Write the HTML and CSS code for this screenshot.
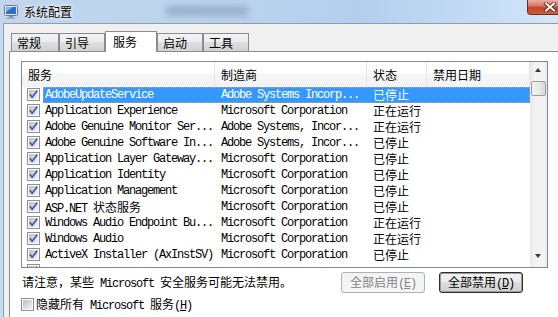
FILE: index.html
```html
<!DOCTYPE html>
<html>
<head>
<meta charset="utf-8">
<link rel="stylesheet" href="styles.css">
</head>
<body>
<svg class="defs" width="0" height="0">
  <defs>
    <linearGradient id="cbg" x1="0" y1="0" x2="1" y2="1">
      <stop offset="0" stop-color="#b9bec6"/>
      <stop offset="1" stop-color="#f4f4f5"/>
    </linearGradient>
    <symbol id="chk" viewBox="0 0 13 13">
      <rect x="0.5" y="0.5" width="12" height="12" fill="#fff" stroke="#8f8f8f"/>
      <rect x="2" y="2" width="9" height="9" fill="url(#cbg)"/>
      <path d="M2.8 6.4 L5.2 9.2 L10.2 2.8" fill="none" stroke="#40569a" stroke-width="1.7"/>
    </symbol>
    <symbol id="unchk" viewBox="0 0 13 13">
      <rect x="0.5" y="0.5" width="12" height="12" fill="#fff" stroke="#8f8f8f"/>
      <rect x="2" y="2" width="9" height="9" fill="url(#cbg)"/>
    </symbol>
  </defs>
</svg>
<div class="titlebar">
  <svg class="appicon" width="14" height="14" viewBox="0 0 14 14">
    <rect x="0.5" y="0.5" width="13" height="10" rx="1" fill="#dfe6ef" stroke="#6b7b91"/>
    <rect x="2" y="2" width="10" height="7" fill="#2f6fc4"/>
    <path d="M2 2 L9 2 L2 7 Z" fill="#7fb2ea"/>
    <rect x="5" y="11" width="4" height="1.5" fill="#7d8796"/>
    <rect x="3" y="12.5" width="8" height="1.5" fill="#9aa4b2"/>
  </svg>
  <span class="title">系统配置</span>
  <div class="blur"></div>
  <div class="close">
    <svg width="14" height="10" viewBox="0 0 14 10">
      <path d="M3 1.5 L11 8.5 M11 1.5 L3 8.5" stroke="#5a1d14" stroke-width="3.6" stroke-linecap="square"/>
      <path d="M3 1.5 L11 8.5 M11 1.5 L3 8.5" stroke="#fff" stroke-width="2" stroke-linecap="square"/>
    </svg>
  </div>
</div>
<div class="client">
  <div class="tabs">
    <div class="tab t1">常规</div>
    <div class="tab t2">引导</div>
    <div class="tab sel">服务</div>
    <div class="tab t4">启动</div>
    <div class="tab t5">工具</div>
  </div>
  <div class="panel">
    <div class="list">
      <div class="lv">
        <div class="hdr">
          <div class="hc">服务</div>
          <div class="hc">制造商</div>
          <div class="hc">状态</div>
          <div class="hc">禁用日期</div>
        </div>
        <div class="rows">
          <div class="row selrow"><div class="ck"><svg class="cb"><use href="#chk"/></svg></div><div class="cells"><div class="c1">AdobeUpdateService</div><div class="c2">Adobe Systems Incorp...</div><div class="c3">已停止</div><div class="c4"></div></div></div>
          <div class="row"><div class="ck"><svg class="cb"><use href="#chk"/></svg></div><div class="cells"><div class="c1">Application Experience</div><div class="c2">Microsoft Corporation</div><div class="c3">正在运行</div><div class="c4"></div></div></div>
          <div class="row"><div class="ck"><svg class="cb"><use href="#chk"/></svg></div><div class="cells"><div class="c1">Adobe Genuine Monitor Ser...</div><div class="c2">Adobe Systems, Incor...</div><div class="c3">正在运行</div><div class="c4"></div></div></div>
          <div class="row"><div class="ck"><svg class="cb"><use href="#chk"/></svg></div><div class="cells"><div class="c1">Adobe Genuine Software In...</div><div class="c2">Adobe Systems, Incor...</div><div class="c3">已停止</div><div class="c4"></div></div></div>
          <div class="row"><div class="ck"><svg class="cb"><use href="#chk"/></svg></div><div class="cells"><div class="c1">Application Layer Gateway...</div><div class="c2">Microsoft Corporation</div><div class="c3">已停止</div><div class="c4"></div></div></div>
          <div class="row"><div class="ck"><svg class="cb"><use href="#chk"/></svg></div><div class="cells"><div class="c1">Application Identity</div><div class="c2">Microsoft Corporation</div><div class="c3">已停止</div><div class="c4"></div></div></div>
          <div class="row"><div class="ck"><svg class="cb"><use href="#chk"/></svg></div><div class="cells"><div class="c1">Application Management</div><div class="c2">Microsoft Corporation</div><div class="c3">已停止</div><div class="c4"></div></div></div>
          <div class="row"><div class="ck"><svg class="cb"><use href="#chk"/></svg></div><div class="cells"><div class="c1">ASP.NET <span class="cj">状态服务</span></div><div class="c2">Microsoft Corporation</div><div class="c3">已停止</div><div class="c4"></div></div></div>
          <div class="row"><div class="ck"><svg class="cb"><use href="#chk"/></svg></div><div class="cells"><div class="c1">Windows Audio Endpoint Bu...</div><div class="c2">Microsoft Corporation</div><div class="c3">正在运行</div><div class="c4"></div></div></div>
          <div class="row"><div class="ck"><svg class="cb"><use href="#chk"/></svg></div><div class="cells"><div class="c1">Windows Audio</div><div class="c2">Microsoft Corporation</div><div class="c3">正在运行</div><div class="c4"></div></div></div>
          <div class="row"><div class="ck"><svg class="cb"><use href="#chk"/></svg></div><div class="cells"><div class="c1">ActiveX Installer (AxInstSV)</div><div class="c2">Microsoft Corporation</div><div class="c3">已停止</div><div class="c4"></div></div></div>
          <div class="row"><div class="ck"><svg class="cb"><use href="#chk"/></svg></div><div class="cells"><div class="c1"></div><div class="c2"></div><div class="c3"></div><div class="c4"></div></div></div>
        </div>
      </div>
      <div class="sb">
        <div class="arrow up"></div>
        <div class="thumb"></div>
        <div class="track"></div>
        <div class="arrow down"></div>
      </div>
    </div>
    <div class="note-row">
      <div class="note">请注意，某些<span class="m"> Microsoft </span>安全服务可能无法禁用。</div>
      <div class="btn dis">全部启用<span class="m">(<u>E</u>)</span></div>
      <div class="btn def">全部禁用<span class="m">(<u>D</u>)</span></div>
    </div>
    <div class="hide-row">
      <svg class="cb"><use href="#unchk"/></svg>
      <span class="lbl">隐藏所有<span class="m"> Microsoft </span>服务<span class="m">(<u>H</u>)</span></span>
    </div>
  </div>
</div>
</body>
</html>
```
FILE: styles.css
```css
* { box-sizing: border-box; margin: 0; padding: 0; }
html, body { width: 558px; height: 317px; overflow: hidden; }
body {
  background: #c8dbef;
  font-family: "Noto Sans CJK SC", sans-serif;
  font-size: 12px;
  color: #000;
}
.defs { position: absolute; width: 0; height: 0; }

.titlebar {
  position: relative;
  height: 23px;
  display: flex;
  align-items: center;
  padding-left: 4px;
  background: linear-gradient(90deg, #c1d6ed 0%, #bcd3ed 35%, #b4cfee 65%, #c3dbf4 85%, #d4e7f8 100%);
}
.appicon { width: 14px; height: 14px; flex: none; margin-top: 1px; }
.title {
  margin-left: 6px;
  font-size: 12px;
  line-height: 14px;
  text-shadow: 0 0 5px #fff, 0 0 3px #fff;
}
.blur {
  position: absolute;
  left: 166px;
  top: 6px;
  width: 82px;
  height: 10px;
  background: #7c8ea9;
  filter: blur(3px);
  opacity: .5;
}
.close {
  position: absolute;
  left: 527px;
  top: 0;
  width: 44px;
  height: 15px;
  border: 1px solid #6e2a20;
  border-top: none;
  border-radius: 0 0 0 4px;
  background: linear-gradient(#eab1a4, #d67a66 40%, #c3432c 55%, #cf5c41);
}
.close svg { position: absolute; left: 15px; top: 2px; }

.client {
  height: 294px;
  margin-left: 3px;
  border-top: 1px solid #8d9db2;
  border-left: 1px solid #8d9db2;
  background: #f0f0f0;
  padding-left: 5px;
}
.tabs {
  display: flex;
  align-items: flex-end;
  height: 27px;
  padding-top: 7px;
  padding-left: 2px;
}
.tab {
  height: 18px;
  border: 1px solid #898c95;
  border-bottom: none;
  background: linear-gradient(#f3f3f3, #ececec 50%, #dedede 50%, #d2d2d2);
  padding-left: 5px;
  line-height: 17px;
  font-size: 12px;
}
.t1 { width: 48px; }
.t2 { width: 46px; }
.t4 { width: 46px; }
.t5 { width: 46px; }
.tab.sel {
  width: 52px;
  height: 21px;
  margin-bottom: -1px;
  background: #fff;
  position: relative;
  z-index: 1;
  padding-left: 7px;
  line-height: 19px;
}

.panel {
  height: 267px;
  border-top: 1px solid #898c95;
  border-left: 1px solid #898c95;
  background: #fff;
  padding-left: 11px;
  padding-top: 9px;
}
.list {
  width: 527px;
  height: 207px;
  border: 1px solid #828790;
  display: flex;
  background: #fff;
}
.lv { width: 508px; overflow: hidden; }
.hdr {
  display: grid;
  grid-template-columns: 193px 152px 60px 103px;
  height: 25px;
  background: linear-gradient(#ffffff, #ffffff 45%, #f6f7f8 45%, #f1f2f4);
}
.hc {
  padding-left: 6px;
  padding-top: 4px;
  line-height: 18px;
  border-right: 1px solid #e3e5e8;
  font-size: 12px;
}
.rows { height: 180px; overflow: hidden; }
.row { display: flex; height: 16px; }
.ck { width: 21px; flex: none; padding-left: 5px; padding-top: 1px; }
.cb { width: 13px; height: 13px; display: block; }
.cells {
  display: grid;
  grid-template-columns: 172px 152px 60px 103px;
  height: 16px;
  line-height: 16px;
  font-family: "Liberation Mono", monospace;
  font-size: 12px;
  letter-spacing: -1.2px;
  white-space: pre;
}
.c1 { padding-left: 2px; overflow: hidden; }
.c2 { padding-left: 6px; overflow: hidden; }
.c3 {
  padding-left: 6px;
  font-family: "Noto Sans CJK SC", sans-serif;
  font-size: 12px;
  letter-spacing: 0;
}
.cj {
  font-family: "Noto Sans CJK SC", sans-serif;
  font-size: 12px;
  letter-spacing: 0;
}
.selrow .cells {
  background: #3399ff;
  color: #fff;
  outline: 1px dotted #e8964a;
  outline-offset: -1px;
}

.sb {
  width: 17px;
  flex: none;
  display: flex;
  flex-direction: column;
  background: linear-gradient(90deg, #e6e6e6, #f2f2f2 25%, #f4f4f4 75%, #ececec);
}
.arrow { height: 17px; position: relative; }
.arrow::after {
  content: "";
  position: absolute;
  left: 5px;
  width: 0;
  height: 0;
  border-left: 3.5px solid transparent;
  border-right: 3.5px solid transparent;
}
.up::after { top: 6px; border-bottom: 4px solid #3a3a3a; }
.down::after { top: 4px; border-top: 4px solid #3a3a3a; }
.thumb {
  height: 15px;
  margin: 2px 1px 0 1px;
  border: 1px solid #9b9b9b;
  border-radius: 2px;
  background: linear-gradient(90deg, #f3f3f3, #eaeaea 50%, #d9d9d9);
}
.track { flex: 1; }

.m {
  font-family: "Liberation Mono", monospace;
  font-size: 12px;
  letter-spacing: -1.2px;
}
.note-row {
  width: 513px;
  display: flex;
  align-items: center;
  height: 21px;
  margin-top: 4px;
  margin-left: -11px;
  padding-left: 12px;
}
.note { flex: 1; font-size: 12px; white-space: pre; line-height: 16px; }
.btn {
  width: 84px;
  height: 21px;
  border: 1px solid #707070;
  border-radius: 3px;
  background: linear-gradient(#f2f2f2, #ebebeb 50%, #dddddd 50%, #cfcfcf);
  text-align: center;
  line-height: 18px;
  font-size: 12px;
  white-space: pre;
}
.btn.dis {
  border-color: #adb2b5;
  background: #f4f4f4;
  color: #838383;
}
.btn.def {
  margin-left: 14px;
  border-color: #2e2e2e;
  box-shadow: inset 0 0 0 1px #9a9a9a;
}
.hide-row {
  display: flex;
  align-items: center;
  height: 13px;
  margin-top: 5px;
  gap: 2px;
}
.lbl { font-size: 12px; white-space: pre; line-height: 14px; }
```
